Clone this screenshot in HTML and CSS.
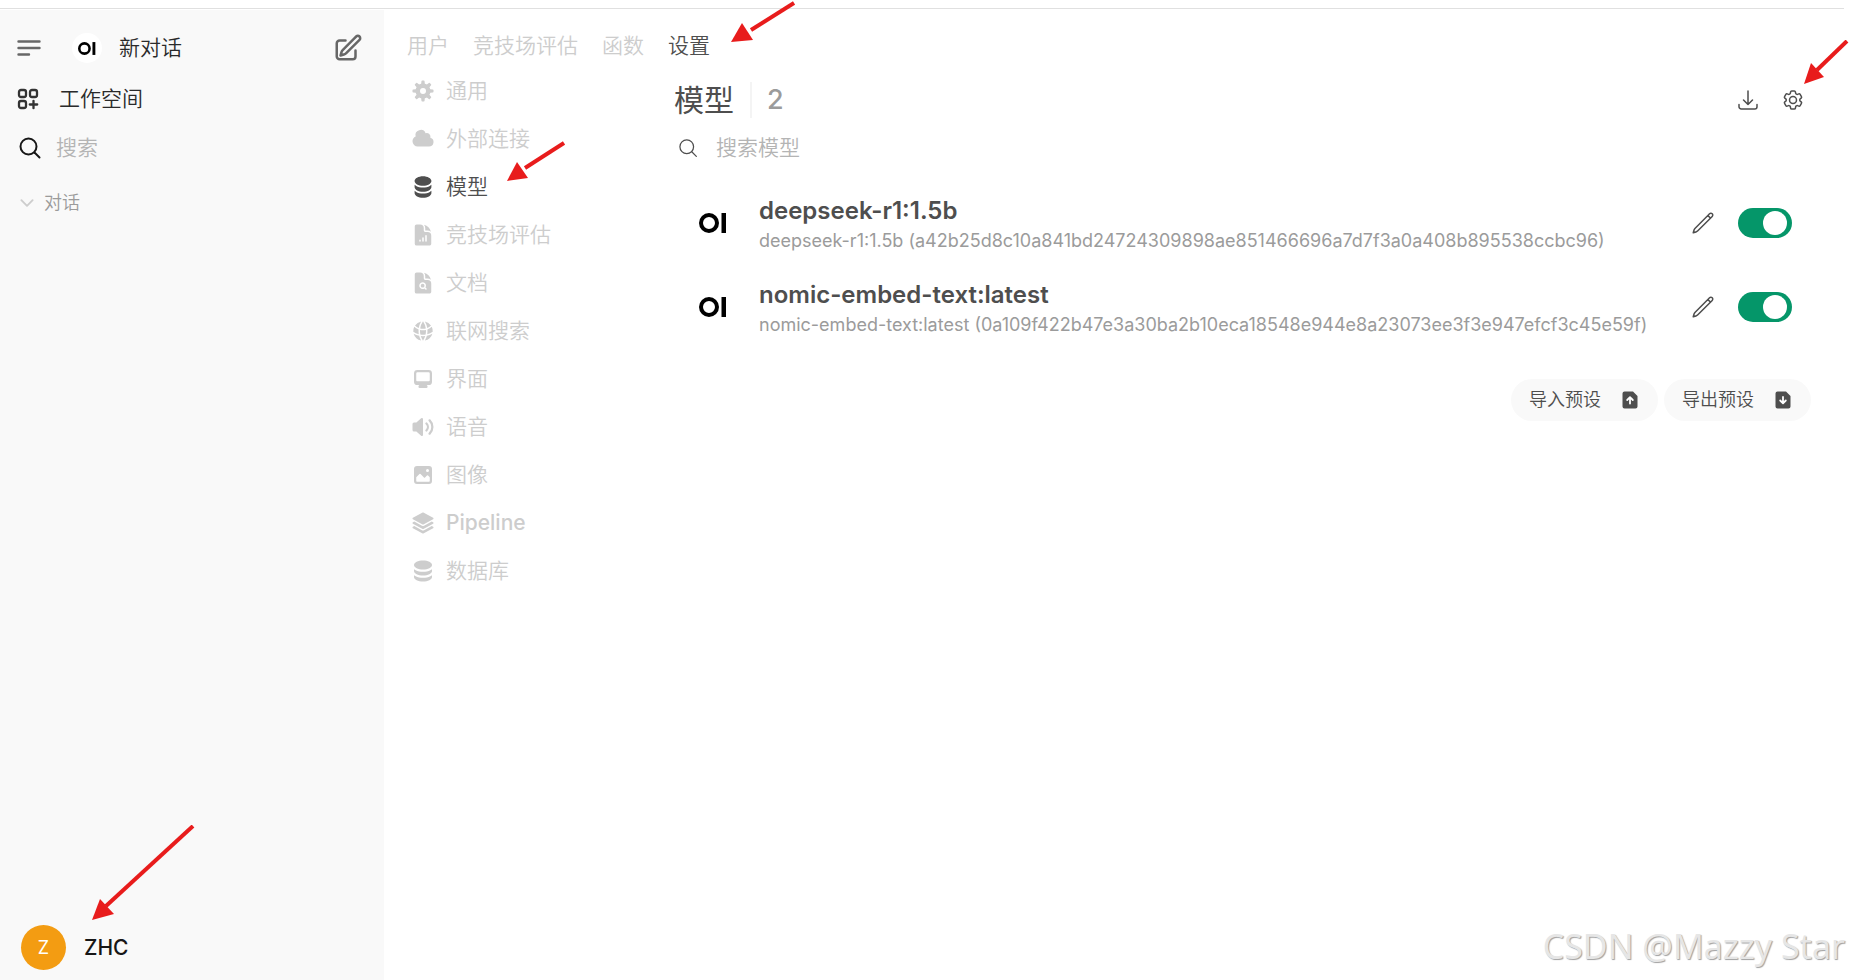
FILE: index.html
```html
<!DOCTYPE html>
<html lang="zh-CN">
<head>
<meta charset="utf-8">
<title>模型设置</title>
<link rel="stylesheet" href="styles.css">
</head>
<body>
<svg class="defs" aria-hidden="true">
  <symbol id="logo" viewBox="0 0 28 20"><circle cx="10" cy="10" r="8" fill="none" stroke="#000" stroke-width="4"/><path fill="#000" d="M22.500 0H27V20H22.500z"/></symbol>
  <symbol id="pencil" viewBox="0 0 24 24"><path d="m16.862 4.487 1.687-1.688a1.875 1.875 0 1 1 2.652 2.652L6.832 19.82a4.5 4.5 0 0 1-1.897 1.13l-2.685.8.8-2.685a4.500 4.500 0 0 1 1.130-1.897L16.863 4.487Zm0 0L19.500 7.125"/></symbol>
</svg>
<div class="top-line"></div>
<div class="app">
  <aside class="sidebar">
    <div class="side-head">
      <button class="icon-btn" aria-label="菜单"><svg class="i-menu" viewBox="0 0 24 16" fill="none" stroke="#676767" stroke-width="2.400" stroke-linecap="round"><path d="M1.500 1.500h21M1.500 8h21M1.500 14.500h10.500"/></svg></button>
      <a class="new-chat" href="#new"><span class="logo-badge"><svg class="i-logo-sm"><use href="#logo"/></svg></span>新对话</a>
      <button class="icon-btn" aria-label="编辑"><svg class="i30" viewBox="0 0 24 24" fill="none" stroke="#676767" stroke-width="2" stroke-linecap="round" stroke-linejoin="round"><path d="m16.862 4.487 1.687-1.688a1.875 1.875 0 1 1 2.652 2.652L10.582 16.070a4.500 4.500 0 0 1-1.897 1.130L6 18l.8-2.685a4.500 4.500 0 0 1 1.130-1.897l8.932-8.931ZM18 14v4.750A2.250 2.250 0 0 1 15.750 21H5.250A2.250 2.250 0 0 1 3 18.750V8.250A2.250 2.250 0 0 1 5.250 6H10"/></svg></button>
    </div>
    <a class="workspace" href="#workspace"><svg class="i24" viewBox="0 0 24 24" fill="none" stroke="#333" stroke-width="2.300" stroke-linecap="round"><rect x="3" y="3" width="7" height="7" rx="2"/><rect x="14" y="3" width="7" height="7" rx="2"/><rect x="3" y="14" width="7" height="7" rx="2"/><path d="M17.500 13.800v7.400M13.800 17.500h7.400"/></svg>工作空间</a>
    <label class="side-search"><svg class="i24" viewBox="0 0 24 24" fill="none" stroke="#171717" stroke-width="2" stroke-linecap="round"><circle cx="10.500" cy="10.500" r="8"/><path d="m16.500 16.500 5 5"/></svg><input type="text" placeholder="搜索" aria-label="搜索"></label>
    <button class="fold"><svg class="i18" viewBox="0 0 24 24" fill="none" stroke="#cdcdcd" stroke-width="2.500" stroke-linecap="round" stroke-linejoin="round"><path d="m19.500 8.250-7.500 7.500-7.500-7.500"/></svg>对话</button>
    <button class="user"><span class="avatar">Z</span>ZHC</button>
  </aside>
  <main class="main">
    <nav class="tabs"><a href="#users">用户</a><a href="#evaluations">竞技场评估</a><a href="#functions">函数</a><a class="on" href="#settings">设置</a></nav>
    <div class="body">
      <nav class="menu">
        <a href="#general"><svg class="i24" viewBox="0 0 16 16" fill="currentColor" fill-rule="evenodd"><path d="M6.955 1.450A.5.5 0 0 1 7.452 1h1.096a.5.5 0 0 1 .497.450l.17 1.699c.484.12.94.312 1.356.562l1.321-1.081a.5.5 0 0 1 .67.033l.774.775a.5.5 0 0 1 .034.670l-1.080 1.320c.25.417.44.873.561 1.357l1.699.17a.5.5 0 0 1 .45.497v1.096a.5.5 0 0 1-.45.497l-1.699.17c-.12.484-.312.94-.562 1.356l1.082 1.322a.5.5 0 0 1-.034.67l-.774.774a.5.5 0 0 1-.67.033l-1.322-1.080c-.416.25-.872.44-1.356.561l-.17 1.699a.5.5 0 0 1-.497.450H7.452a.5.5 0 0 1-.497-.45l-.17-1.699a4.973 4.973 0 0 1-1.356-.562L4.108 13.370a.5.5 0 0 1-.67-.033l-.774-.775a.5.5 0 0 1-.034-.67l1.080-1.320a4.971 4.971 0 0 1-.561-1.357l-1.699-.17A.5.5 0 0 1 1 8.548V7.452a.5.5 0 0 1 .45-.497l1.699-.17c.12-.484.312-.94.562-1.356L2.629 4.107a.5.5 0 0 1 .034-.67l.774-.774a.5.5 0 0 1 .67-.033L5.430 3.710a4.970 4.970 0 0 1 1.356-.561l.17-1.699ZM6 8a2 2 0 1 0 4 0 2 2 0 0 0-4 0Z"/></svg>通用</a>
        <a href="#connections"><svg class="i24" viewBox="0 0 16 16" fill="currentColor"><path d="M1 9.500A3.500 3.500 0 0 0 4.500 13H12a3 3 0 0 0 .917-5.857 2.503 2.503 0 0 0-3.198-3.019 3.500 3.500 0 0 0-6.628 2.171A3.500 3.500 0 0 0 1 9.500Z"/></svg>外部连接</a>
        <a class="on" href="#models"><svg class="i24" viewBox="0 0 20 20" fill="currentColor"><path d="M10 1c3.866 0 7 1.790 7 4s-3.134 4-7 4-7-1.790-7-4 3.134-4 7-4Zm5.694 8.130c.464-.264.91-.583 1.306-.952V10c0 2.210-3.134 4-7 4s-7-1.790-7-4V8.178c.396.37.842.688 1.306.953C5.838 10.006 7.854 10.500 10 10.500s4.162-.494 5.694-1.370ZM3 13.179V15c0 2.210 3.134 4 7 4s7-1.790 7-4v-1.822c-.396.37-.842.688-1.306.953-1.532.875-3.548 1.369-5.694 1.369s-4.162-.494-5.694-1.370A7.009 7.009 0 0 1 3 13.179Z"/></svg>模型</a>
        <a href="#arena"><svg class="i24" viewBox="0 0 24 24" fill="currentColor" fill-rule="evenodd"><path d="M5.625 1.500H9a3.750 3.750 0 0 1 3.750 3.750v1.875c0 1.036.84 1.875 1.875 1.875H16.500a3.750 3.750 0 0 1 3.750 3.750v7.875c0 1.035-.84 1.875-1.875 1.875H5.625a1.875 1.875 0 0 1-1.875-1.875V3.375c0-1.036.84-1.875 1.875-1.875ZM9.750 17.250a.75.75 0 0 0-1.500 0V18a.75.75 0 0 0 1.500 0v-.75Zm2.250-3a.75.75 0 0 1 .75.75v3a.75.75 0 0 1-1.500 0v-3a.75.75 0 0 1 .75-.75Zm3.750-1.500a.75.75 0 0 0-1.500 0V18a.75.75 0 0 0 1.500 0v-5.250Z"/><path d="M14.250 5.250a5.230 5.230 0 0 0-1.279-3.434 9.768 9.768 0 0 1 6.963 6.963A5.230 5.230 0 0 0 16.500 7.500h-1.875a.375.375 0 0 1-.375-.375V5.250Z"/></svg>竞技场评估</a>
        <a href="#documents"><svg class="i24" viewBox="0 0 24 24" fill="currentColor" fill-rule="evenodd"><path d="M11.625 16.500a1.875 1.875 0 1 0 0-3.750 1.875 1.875 0 0 0 0 3.750Z"/><path d="M5.625 1.500H9a3.750 3.750 0 0 1 3.750 3.750v1.875c0 1.036.84 1.875 1.875 1.875H16.500a3.750 3.750 0 0 1 3.750 3.750v7.875c0 1.035-.84 1.875-1.875 1.875H5.625a1.875 1.875 0 0 1-1.875-1.875V3.375c0-1.036.84-1.875 1.875-1.875Zm6 16.500c.66 0 1.277-.19 1.797-.518l1.048 1.048a.75.75 0 0 0 1.060-1.060l-1.047-1.048A3.375 3.375 0 1 0 11.625 18Z"/><path d="M14.250 5.250a5.230 5.230 0 0 0-1.279-3.434 9.768 9.768 0 0 1 6.963 6.963A5.230 5.230 0 0 0 16.500 7.500h-1.875a.375.375 0 0 1-.375-.375V5.250Z"/></svg>文档</a>
        <a href="#web"><svg class="i24" viewBox="0 0 24 24" fill="currentColor"><path d="M21.721 12.752a9.711 9.711 0 0 0-.945-5.003 12.754 12.754 0 0 1-4.339 2.708 18.991 18.991 0 0 1-.214 4.772 17.165 17.165 0 0 0 5.498-2.477ZM14.634 15.550a17.324 17.324 0 0 0 .332-4.647c-.952.227-1.945.347-2.966.347-1.021 0-2.014-.12-2.966-.347a17.515 17.515 0 0 0 .332 4.647 17.385 17.385 0 0 0 5.268 0ZM9.772 17.119a18.963 18.963 0 0 0 4.456 0A17.182 17.182 0 0 1 12 21.724a17.180 17.180 0 0 1-2.228-4.605ZM7.777 15.230a18.870 18.870 0 0 1-.214-4.774 12.753 12.753 0 0 1-4.340-2.708 9.711 9.711 0 0 0-.944 5.004 17.165 17.165 0 0 0 5.498 2.477ZM21.356 14.752a9.765 9.765 0 0 1-7.478 6.817 18.640 18.640 0 0 0 1.988-4.718 18.627 18.627 0 0 0 5.490-2.098ZM2.644 14.752c1.682.971 3.530 1.688 5.490 2.099a18.640 18.640 0 0 0 1.988 4.718 9.765 9.765 0 0 1-7.478-6.816ZM13.878 2.430a9.755 9.755 0 0 1 6.116 3.986 11.267 11.267 0 0 1-3.746 2.504 18.630 18.630 0 0 0-2.370-6.490ZM12 2.276a17.152 17.152 0 0 1 2.805 7.121c-.897.23-1.837.353-2.805.353-.968 0-1.908-.122-2.805-.353A17.151 17.151 0 0 1 12 2.276ZM10.122 2.430a18.629 18.629 0 0 0-2.370 6.490 11.266 11.266 0 0 1-3.746-2.504 9.754 9.754 0 0 1 6.116-3.985Z"/></svg>联网搜索</a>
        <a href="#interface"><svg class="i24" viewBox="0 0 16 16" fill="currentColor" fill-rule="evenodd"><path d="M2 4.250A2.250 2.250 0 0 1 4.250 2h7.500A2.250 2.250 0 0 1 14 4.250v5.500A2.250 2.250 0 0 1 11.750 12h-1.312c.1.128.21.248.328.36a.75.75 0 0 1 .234.545v.345a.75.75 0 0 1-.75.75h-4.500a.75.75 0 0 1-.75-.75v-.345a.75.75 0 0 1 .234-.545c.118-.111.228-.232.328-.36H4.250A2.250 2.250 0 0 1 2 9.750v-5.500Zm2.250-.75a.75.75 0 0 0-.75.75v4.500c0 .414.336.75.75.75h7.500a.75.75 0 0 0 .75-.75v-4.500a.75.75 0 0 0-.75-.75h-7.500Z"/></svg>界面</a>
        <a href="#audio"><svg class="i24" viewBox="0 0 16 16" fill="currentColor"><path d="M7.557 2.066A.75.75 0 0 1 8 2.750v10.500a.75.75 0 0 1-1.248.56L3.590 11H2a1 1 0 0 1-1-1V6a1 1 0 0 1 1-1h1.590l3.162-2.810a.75.75 0 0 1 .805-.124ZM12.950 3.050a.75.75 0 1 0-1.060 1.060 5.500 5.500 0 0 1 0 7.780.75.75 0 1 0 1.060 1.060 7 7 0 0 0 0-9.900Z"/><path d="M10.828 5.172a.75.75 0 1 0-1.060 1.060 2.500 2.500 0 0 1 0 3.536.75.75 0 1 0 1.060 1.060 4 4 0 0 0 0-5.656Z"/></svg>语音</a>
        <a href="#images"><svg class="i24" viewBox="0 0 16 16" fill="currentColor" fill-rule="evenodd"><path d="M2 4a2 2 0 0 1 2-2h8a2 2 0 0 1 2 2v8a2 2 0 0 1-2 2H4a2 2 0 0 1-2-2V4Zm10.500 5.707a.5.5 0 0 0-.146-.353l-1-1a.5.5 0 0 0-.708 0L9.354 9.646a.5.5 0 0 1-.708 0L6.354 7.354a.5.5 0 0 0-.708 0l-2 2a.5.5 0 0 0-.146.353V12a.5.5 0 0 0 .5.5h8a.5.5 0 0 0 .5-.5V9.707ZM12 5a1 1 0 1 1-2 0 1 1 0 0 1 2 0Z"/></svg>图像</a>
        <a href="#pipelines"><svg class="i24" viewBox="0 0 24 24" fill="currentColor"><path d="M11.644 1.590a.75.75 0 0 1 .712 0l9.750 5.250a.75.75 0 0 1 0 1.320l-9.750 5.250a.75.75 0 0 1-.712 0l-9.750-5.250a.75.75 0 0 1 0-1.320l9.750-5.250Z"/><path d="M3.265 10.602l7.668 4.129a2.250 2.250 0 0 0 2.134 0l7.668-4.130 1.370.739a.75.75 0 0 1 0 1.320l-9.750 5.250a.75.75 0 0 1-.71 0l-9.750-5.250a.75.75 0 0 1 0-1.320l1.370-.738Z"/><path d="M10.933 19.231l-7.668-4.130-1.370.739a.75.75 0 0 0 0 1.320l9.750 5.250c.221.12.489.12.71 0l9.750-5.250a.75.75 0 0 0 0-1.320l-1.370-.738-7.668 4.130a2.250 2.250 0 0 1-2.134-.001Z"/></svg><b>Pipeline</b></a>
        <a href="#database"><svg class="i24" viewBox="0 0 16 16" fill="currentColor"><path d="M8 7c3.314 0 6-1.343 6-3s-2.686-3-6-3-6 1.343-6 3 2.686 3 6 3Z"/><path d="M8 8.500c1.840 0 3.579-.37 4.914-1.037A6.330 6.330 0 0 0 14 6.780V8c0 1.657-2.686 3-6 3S2 9.657 2 8V6.780c.346.273.72.5 1.087.683C4.420 8.131 6.160 8.500 8 8.500Z"/><path d="M8 12.500c1.840 0 3.579-.37 4.914-1.037.366-.183.74-.41 1.086-.684V12c0 1.657-2.686 3-6 3s-6-1.343-6-3v-1.220c.346.273.72.5 1.087.683C4.420 12.131 6.160 12.500 8 12.500Z"/></svg>数据库</a>
      </nav>
      <section class="content">
        <header class="title-row">
          <h1>模型</h1><span class="count">2</span>
          <button class="icon-btn push" aria-label="下载"><svg class="i24 thin" viewBox="0 0 24 24"><path d="M3 16.500v2.250A2.250 2.250 0 0 0 5.250 21h13.500A2.250 2.250 0 0 0 21 18.750V16.500M16.500 12 12 16.500m0 0L7.500 12m4.500 4.500V3"/></svg></button>
          <button class="icon-btn" aria-label="设置"><svg class="i24 thin" viewBox="0 0 24 24"><path d="M9.594 3.940c.09-.542.56-.94 1.110-.94h2.593c.55 0 1.020.398 1.110.94l.213 1.281c.063.374.313.686.645.87.074.04.147.083.22.127.325.196.72.257 1.075.124l1.217-.456a1.125 1.125 0 0 1 1.370.49l1.296 2.247a1.125 1.125 0 0 1-.26 1.431l-1.003.827c-.293.241-.438.613-.43.992a7.723 7.723 0 0 1 0 .255c-.008.378.137.75.43.991l1.004.827c.424.35.534.955.26 1.430l-1.298 2.247a1.125 1.125 0 0 1-1.369.491l-1.217-.456c-.355-.133-.75-.072-1.076.124a6.470 6.470 0 0 1-.22.128c-.331.183-.581.495-.644.869l-.213 1.281c-.09.543-.56.94-1.110.94h-2.594c-.55 0-1.019-.398-1.110-.94l-.213-1.281c-.062-.374-.312-.686-.644-.87a6.520 6.520 0 0 1-.22-.127c-.325-.196-.72-.257-1.076-.124l-1.217.456a1.125 1.125 0 0 1-1.369-.49l-1.297-2.247a1.125 1.125 0 0 1 .26-1.431l1.004-.827c.292-.24.437-.613.43-.991a6.932 6.932 0 0 1 0-.255c.007-.38-.138-.751-.43-.992l-1.004-.827a1.125 1.125 0 0 1-.26-1.430l1.297-2.247a1.125 1.125 0 0 1 1.370-.491l1.216.456c.356.133.751.072 1.076-.124.072-.044.146-.086.22-.128.332-.183.582-.495.644-.869l.214-1.280Z"/><circle cx="12" cy="12" r="3.500"/></svg></button>
        </header>
        <label class="search"><svg class="i20 thin" viewBox="0 0 24 24"><circle cx="10.500" cy="10.500" r="8.200"/><path d="m16.500 16.500 5.500 5.500"/></svg><input type="text" placeholder="搜索模型" aria-label="搜索模型"></label>
        <ul class="models">
          <li><svg class="i-logo"><use href="#logo"/></svg><div class="info"><h2>deepseek-r1:1.5b</h2><p>deepseek-r1:1.5b (a42b25d8c10a841bd24724309898ae851466696a7d7f3a0a408b895538ccbc96)</p></div><button class="icon-btn" aria-label="编辑 deepseek-r1:1.5b"><svg class="i24 thin"><use href="#pencil"/></svg></button><input class="switch" type="checkbox" checked aria-label="启用 deepseek-r1:1.5b"></li>
          <li><svg class="i-logo"><use href="#logo"/></svg><div class="info"><h2>nomic-embed-text:latest</h2><p>nomic-embed-text:latest (0a109f422b47e3a30ba2b10eca18548e944e8a23073ee3f3e947efcf3c45e59f)</p></div><button class="icon-btn" aria-label="编辑 nomic-embed-text:latest"><svg class="i24 thin"><use href="#pencil"/></svg></button><input class="switch" type="checkbox" checked aria-label="启用 nomic-embed-text:latest"></li>
        </ul>
        <div class="presets">
          <button>导入预设<svg class="i20" viewBox="0 0 20 20"><path fill="#4e4e4e" d="M4.500 1.500H13L17.500 6V16.500a2 2 0 0 1-2 2h-11a2 2 0 0 1-2-2v-13a2 2 0 0 1 2-2Z"/><path fill="none" stroke="#fff" stroke-width="1.800" stroke-linecap="round" stroke-linejoin="round" d="M10 13.500V7.500M7.200 10 10 7.200l2.800 2.800"/></svg></button>
          <button>导出预设<svg class="i20" viewBox="0 0 20 20"><path fill="#4e4e4e" d="M4.500 1.500H13L17.500 6V16.500a2 2 0 0 1-2 2h-11a2 2 0 0 1-2-2v-13a2 2 0 0 1 2-2Z"/><path fill="none" stroke="#fff" stroke-width="1.800" stroke-linecap="round" stroke-linejoin="round" d="M10 7V13M7.200 10.500l2.800 2.800 2.800-2.800"/></svg></button>
        </div>
      </section>
    </div>
  </main>
</div>
<svg class="arrow a-settings" viewBox="0 0 64 42"><path d="M63 2 20 29"/><polygon points="0,41 11,22 22,39"/></svg>
<svg class="arrow a-models" viewBox="0 0 58 42"><path d="M57 2 18 27"/><polygon points="0,40 10,21 21,37"/></svg>
<svg class="arrow a-gear" viewBox="0 0 46 46"><path d="M43 1 13 30"/><polygon points="0,44 7,23 20,37"/></svg>
<svg class="arrow a-user" viewBox="0 0 104 96"><path d="M101 1 14 81"/><polygon points="0,95 8,74 22,89"/></svg>
<div class="watermark">CSDN @Mazzy Star</div>
</body>
</html>
```
FILE: styles.css
```css
* { box-sizing: border-box; }
body { margin: 0; position: relative; min-height: 100vh; overflow: hidden; display: flex; flex-direction: column; background: #fff; color: #4e4e4e; font: 350 21px/30px Inter, "Noto Sans CJK SC", sans-serif; }
a { color: inherit; text-decoration: none; }
button { border: 0; background: none; padding: 0; font: inherit; color: inherit; cursor: pointer; }
input { font: inherit; color: inherit; border: 0; outline: 0; background: none; padding: 0; min-width: 0; flex: 1; }
input::placeholder { color: #b4b4b4; opacity: 1; }
h1, h2, p, ul { margin: 0; padding: 0; list-style: none; }
svg { flex: none; display: block; }
.defs { position: absolute; width: 0; height: 0; }
.top-line { height: 10px; margin-right: 5px; background: linear-gradient(#e0e0e0, #e0e0e0) 0 8px / 100% 1px no-repeat; }
.app { flex: 1; display: flex; }
.i18 { width: 18px; height: 18px; }
.i20 { width: 20px; height: 20px; }
.i24 { width: 24px; height: 24px; }
.i30 { width: 30px; height: 30px; }
.i-menu { width: 24px; height: 16px; }
.i-logo { width: 28px; height: 20px; }
.i-logo-sm { width: 18px; height: 13px; }
.thin { fill: none; stroke: #4e4e4e; stroke-width: 1.5; stroke-linecap: round; stroke-linejoin: round; }
.icon-btn { display: grid; place-items: center; }

.sidebar { width: 384px; flex: none; background: #f9f9f9; color: #2a2a2a; padding: 20px 21px 10px 16px; display: flex; flex-direction: column; }
.side-head { display: flex; align-items: center; height: 36px; padding-left: 1px; }
.new-chat { flex: 1; display: flex; align-items: center; gap: 17px; margin-left: 31px; }
.logo-badge { width: 30px; height: 30px; border-radius: 50%; background: #fff; display: grid; place-items: center; }
.workspace { display: flex; align-items: center; gap: 19px; height: 30px; margin-top: 18px; }
.side-search { display: flex; align-items: center; gap: 14px; height: 30px; margin: 19px 0 0 2px; }
.fold { display: flex; align-items: center; gap: 8px; margin: 25px 0 0 2px; font-size: 18px; color: #9b9b9b; align-self: flex-start; }
.user { display: flex; align-items: center; gap: 18px; margin: auto 0 0 5px; font-weight: 500; align-self: flex-start; color: #171717; }
.avatar { width: 45px; height: 45px; border-radius: 50%; background: #f39c12; color: #fff; display: grid; place-items: center; font-size: 18px; font-weight: 400; }

.main { flex: 1; min-width: 0; padding: 21px 34px 0 23px; }
.tabs { display: flex; gap: 24px; color: #cdcdcd; }
.tabs .on, .menu .on { color: #4e4e4e; }
.body { display: flex; }
.menu { width: 267px; flex: none; display: flex; flex-direction: column; gap: 18px; padding: 15px 0 0 4px; color: #cdcdcd; }
.menu a { display: flex; align-items: center; gap: 11px; }
.menu b { font-weight: 500; }
.content { flex: 1; min-width: 0; }
.title-row { display: flex; align-items: center; height: 36px; margin-top: 21px; padding-right: 10px; }
h1 { font-size: 30px; font-weight: 400; }
.count { margin-left: 16px; padding-left: 15px; line-height: 36px; border-left: 2px solid #f4f4f4; font-size: 27px; font-weight: 500; color: #9b9b9b; }
.push { margin: 0 21px 0 auto; }
.title-row .icon-btn { width: 24px; height: 24px; }
.search { display: flex; align-items: center; gap: 18px; height: 30px; margin: 15px 0 0 4px; }
.models { padding-top: 33px; display: flex; flex-direction: column; gap: 24px; }
.models li { display: flex; align-items: center; height: 60px; padding: 0 23px 0 25px; }
.info { flex: 1; min-width: 0; margin-left: 32px; }
h2 { font-size: 24px; line-height: 36px; font-weight: 600; }
.info p { font-size: 18px; line-height: 24px; font-weight: 400; color: #9b9b9b; white-space: nowrap; overflow: hidden; text-overflow: ellipsis; }
.models { margin-top: -3px; }
.models .icon-btn { margin: 0 23px 0 12px; }
.switch { appearance: none; flex: none; width: 54px; height: 30px; margin: 0; border-radius: 15px; background: #059669; display: flex; align-items: center; justify-content: flex-end; padding: 0 5px; }
.switch::before { content: ""; width: 24px; height: 24px; border-radius: 50%; background: #fff; }
.switch:not(:checked) { background: #e3e3e3; justify-content: flex-start; }
.presets { display: flex; justify-content: flex-end; gap: 6px; margin: 42px 4px 0 0; }
.presets button { display: flex; align-items: center; gap: 19px; height: 42px; padding: 0 18px; border-radius: 21px; background: #f9f9f9; font-size: 18px; }

.arrow { position: absolute; fill: #e81c1c; stroke: none; }
.arrow path { fill: none; stroke: #e81c1c; stroke-width: 4; }
.a-settings { left: 731px; top: 1px; width: 64px; height: 42px; }
.a-models { left: 507px; top: 141px; width: 58px; height: 42px; }
.a-gear { right: -1px; top: 40px; width: 46px; height: 46px; }
.a-user { left: 92px; bottom: 59px; width: 104px; height: 96px; }
.watermark { position: absolute; right: 4px; bottom: 14px; font: 400 34px/40px "Noto Sans", sans-serif; color: #e6e6e6; text-shadow: 1px 1px 1px #a0a0a0; }
```
